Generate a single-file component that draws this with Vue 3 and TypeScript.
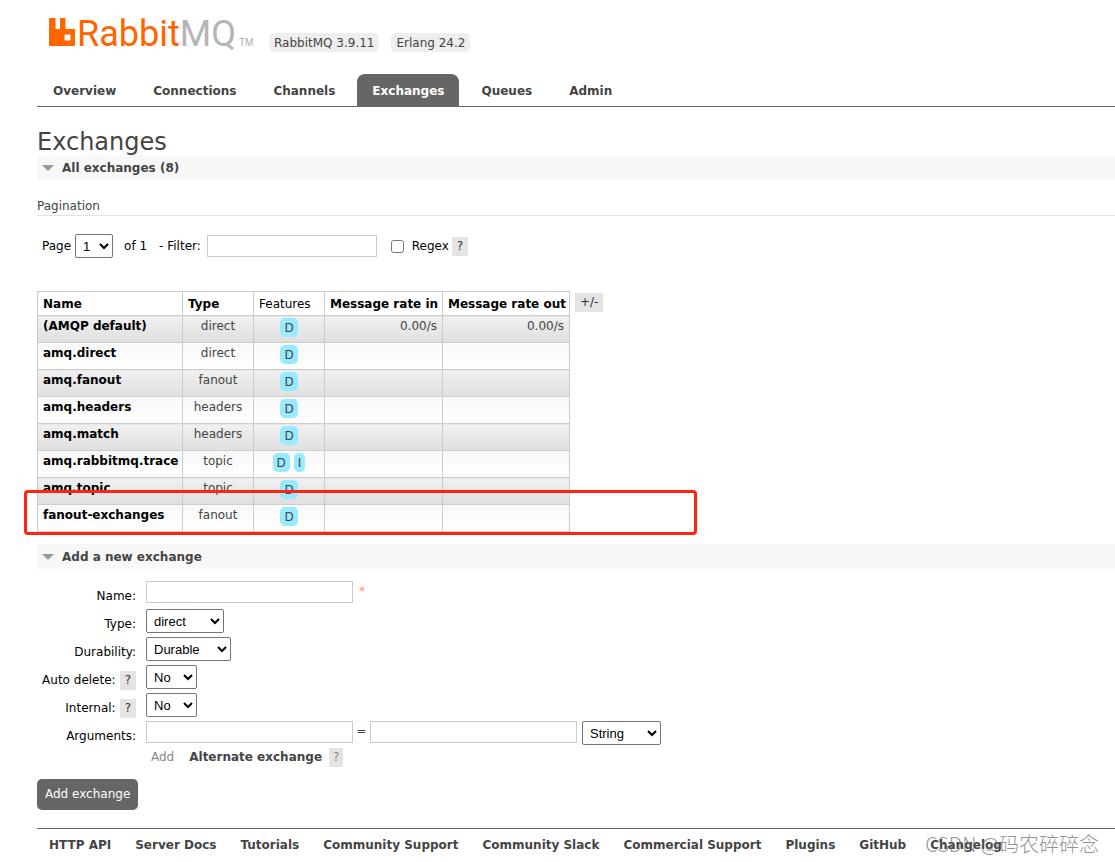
<script setup lang="ts">
import { ref } from 'vue'

interface Exchange {
  name: string
  type: string
  features: string[]
  rateIn?: string
  rateOut?: string
}

interface SelectField {
  id: string
  label: string
  options: string[]
  size: string
  help: boolean
}

const tabs: string[] = ['Overview', 'Connections', 'Channels', 'Exchanges', 'Queues', 'Admin']
const activeTab = ref('Exchanges')

const exchanges: Exchange[] = [
  { name: '(AMQP default)', type: 'direct', features: ['D'], rateIn: '0.00/s', rateOut: '0.00/s' },
  { name: 'amq.direct', type: 'direct', features: ['D'] },
  { name: 'amq.fanout', type: 'fanout', features: ['D'] },
  { name: 'amq.headers', type: 'headers', features: ['D'] },
  { name: 'amq.match', type: 'headers', features: ['D'] },
  { name: 'amq.rabbitmq.trace', type: 'topic', features: ['D', 'I'] },
  { name: 'amq.topic', type: 'topic', features: ['D'] },
  { name: 'fanout-exchanges', type: 'fanout', features: ['D'] },
]

const selectFields: SelectField[] = [
  { id: 'type', label: 'Type:', options: ['direct', 'fanout', 'headers', 'topic'], size: 'w-type', help: false },
  { id: 'durability', label: 'Durability:', options: ['Durable', 'Transient'], size: 'w-durability', help: false },
  { id: 'auto-delete', label: 'Auto delete:', options: ['No', 'Yes'], size: 'w-bool', help: true },
  { id: 'internal', label: 'Internal:', options: ['No', 'Yes'], size: 'w-bool', help: true },
]

const footerLinks: string[] = [
  'HTTP API', 'Server Docs', 'Tutorials', 'Community Support', 'Community Slack',
  'Commercial Support', 'Plugins', 'GitHub', 'Changelog',
]
</script>

<template>
  <div class="page">
    <header>
      <div class="brand">
        <a class="logo" href="#" aria-label="RabbitMQ">
          <svg class="mark" viewBox="0 0 26 28" aria-hidden="true">
            <path fill="#f60" fill-rule="evenodd" d="M1 0h4.500q1 0 1 1v9q0 1 1 1h2.500q1 0 1-1V1q0-1 1-1h3.500q1 0 1 1v9q0 1 1 1H25q1 0 1 1v15q0 1-1 1H1q-1 0-1-1V1q0-1 1-1ZM16.500 16.500q-1 0-1 1v4q0 1 1 1h4q1 0 1-1v-4q0-1-1-1Z" />
          </svg>
          <span class="word">Rabbit</span><span class="word grey">MQ</span><span class="tm">TM</span>
        </a>
        <span class="version">RabbitMQ 3.9.11</span>
        <span class="version">Erlang 24.2</span>
      </div>
      <nav class="tabs">
        <a
          v-for="tab in tabs" :key="tab" href="#"
          :class="{ active: tab === activeTab }" @click.prevent="activeTab = tab"
        >{{ tab }}</a>
      </nav>
    </header>

    <main>
      <h1>Exchanges</h1>
      <h2><svg class="arrow" viewBox="0 0 12 6" aria-hidden="true"><path d="M0 0h12L6 6z" fill="#999" /></svg>All exchanges (8)</h2>

      <h3>Pagination</h3>
      <div class="filter">
        <label for="page">Page</label>
        <select id="page" class="w-page"><option>1</option></select>
        <span class="of">of 1</span>
        <label for="filter">- Filter:</label>
        <input id="filter" class="filter-box" type="text">
        <input id="regex" type="checkbox">
        <label for="regex" class="regex">Regex</label>
        <button type="button" class="help">?</button>
      </div>

      <div class="listing">
        <table>
          <colgroup>
            <col class="c-name"><col class="c-type"><col class="c-features"><col class="c-in"><col class="c-out">
          </colgroup>
          <thead>
            <tr>
              <th>Name</th>
              <th>Type</th>
              <th class="plain">Features</th>
              <th>Message rate in</th>
              <th>Message rate out</th>
            </tr>
          </thead>
          <tbody>
            <tr v-for="x in exchanges" :key="x.name">
              <td><a href="#">{{ x.name }}</a></td>
              <td class="center">{{ x.type }}</td>
              <td class="center features"><abbr v-for="f in x.features" :key="f">{{ f }}</abbr></td>
              <td class="rate">{{ x.rateIn }}</td>
              <td class="rate">{{ x.rateOut }}</td>
            </tr>
          </tbody>
        </table>
        <button type="button" class="help columns">+/-</button>
        <div class="highlight"></div>
      </div>

      <h2><svg class="arrow" viewBox="0 0 12 6" aria-hidden="true"><path d="M0 0h12L6 6z" fill="#999" /></svg>Add a new exchange</h2>
      <form @submit.prevent>
        <div class="row">
          <div class="caption"><label for="name">Name:</label></div>
          <input id="name" class="field" type="text">
          <span class="required">*</span>
        </div>
        <div v-for="f in selectFields" :key="f.id" class="row">
          <div class="caption">
            <label :for="f.id">{{ f.label }}</label>
            <button v-if="f.help" type="button" class="help">?</button>
          </div>
          <select :id="f.id" :class="f.size"><option v-for="o in f.options" :key="o">{{ o }}</option></select>
        </div>
        <div class="row">
          <div class="caption"><label for="arg-key">Arguments:</label></div>
          <input id="arg-key" class="field" type="text">
          <span class="equals">=</span>
          <input class="field" type="text" aria-label="Argument value">
          <select class="w-kind" aria-label="Argument type"><option>String</option><option>Number</option><option>Boolean</option><option>List</option></select>
        </div>
        <div class="shortcuts">
          <span>Add</span>
          <a href="#">Alternate exchange</a>
          <button type="button" class="help">?</button>
        </div>
        <button type="submit" class="submit">Add exchange</button>
      </form>
    </main>

    <footer>
      <a v-for="link in footerLinks" :key="link" href="#">{{ link }}</a>
    </footer>
    <div class="watermark">CSDN @码农碎碎念</div>
  </div>
</template>

<style>
body { margin: 0; background: #fff; }
</style>

<style scoped>
.page {
  position: relative;
  box-sizing: border-box;
  min-height: 100vh;
  padding: 16px 0 0 37px;
  overflow: hidden;
  color: #444;
  font: 12px/18px Verdana, "DejaVu Sans", sans-serif;
}
a { color: #444; font-weight: bold; text-decoration: none; }
.brand { display: flex; align-items: flex-start; height: 58px; padding-left: 12px; }
.logo { display: flex; align-items: flex-start; width: 220px; font-weight: 400; }
.mark { flex: none; width: 26px; height: 28px; margin: 2px 2px 0 0; }
.word { color: #f60; font: 400 36px/36px Roboto, sans-serif; }
.grey { color: #b5b5b5; }
.tm { margin: 21px 0 0 3px; color: #aaa; font: 10px/12px "Liberation Sans", sans-serif; }
.version { margin: 17px 12px 0 0; padding: 1px 5px 0; border-radius: 5px; background: #eee; line-height: 18px; }
.tabs { display: flex; gap: 7px; padding-left: 1px; border-bottom: 1px solid #666; }
.tabs a { padding: 8px 15px 6px; border-radius: 8px 8px 0 0; }
.tabs a.active { background: #666; color: #fff; }
h1 { margin: 20px 0 0; padding-top: 2px; font-size: 24px; font-weight: 400; line-height: 26px; }
h2 { display: flex; align-items: center; gap: 8px; margin: 0; padding: 1px 5px 0; background: #f8f8f8; font-size: 12px; line-height: 24px; }
.arrow { width: 12px; height: 6px; }
h3 { margin: 17px 0 18px; border-bottom: 1px solid #e4e4e4; font-size: 12px; font-weight: 400; line-height: 18px; }
label { color: #000; }
input, select { box-sizing: border-box; margin: 0; }
input[type="text"] { height: 22px; border: 1px solid #ccc; }
select { height: 24px; padding: 0 3px; border: 1px solid #767676; border-radius: 2px; background: #fff; color: #000; font: 13px "Liberation Sans", Arial, sans-serif; }
.help { padding: 0 5px; border: 0; background: #e4e4e4; color: #333; font: inherit; line-height: 19px; }
.filter { display: flex; align-items: center; height: 24px; padding-left: 5px; }
.w-page { width: 38px; margin: 0 11px 0 4px; }
.of { margin-right: 12px; color: #000; }
.filter-box { width: 170px; margin: 0 14px 0 6px; }
.regex { margin: 0 3px 0 8px; }
.listing { position: relative; display: flex; align-items: flex-start; margin: 33px 0 12px; }
table { width: 533px; table-layout: fixed; border-collapse: collapse; }
.c-name { width: 145px; }
.c-type, .c-features { width: 71px; }
.c-in { width: 118px; }
.c-out { width: 127px; }
th, td { box-sizing: border-box; padding: 0 5px; border: 1px solid #ccc; text-align: left; white-space: nowrap; }
th { height: 24px; color: #000; }
.plain { font-weight: 400; }
td { height: 27px; padding-top: 1px; vertical-align: top; }
td a { color: #000; }
tbody tr:nth-child(odd) td { background: linear-gradient(#f0f0f0, #dfdfdf); }
tbody tr:nth-child(even) td { background: linear-gradient(#f8f8f8, #fff); }
.center { text-align: center; }
.rate { text-align: right; }
td.features { padding-top: 2px; }
abbr { display: inline-block; margin: 0 2px; padding: 1px 4px 0; border-radius: 5px; background: #98ebff; line-height: 18px; }
.columns { margin: 2px 0 0 5px; }
.highlight { position: absolute; top: 199px; left: -13px; box-sizing: border-box; width: 673px; height: 45px; border: 3px solid #ff2314; border-radius: 4px; pointer-events: none; }
form { padding-top: 12px; }
.row { display: flex; align-items: flex-start; height: 28px; }
.caption { display: flex; align-items: center; justify-content: flex-end; gap: 4px; width: 99px; height: 30px; margin-right: 10px; }
.field { width: 207px; }
.required { margin-left: 6px; color: #f88; line-height: 20px; }
.equals { width: 17px; line-height: 20px; text-align: center; }
.w-type { width: 78px; }
.w-durability { width: 85px; }
.w-bool { width: 51px; }
.w-kind { width: 79px; margin-left: 5px; }
.shortcuts { display: flex; align-items: center; height: 16px; padding-left: 114px; color: #888; }
.shortcuts a { margin: 0 7px 0 15px; }
.shortcuts .help { padding: 0 4px; color: #888; }
.submit { display: block; margin: 14px 0 18px; padding: 0 8px; border: 0; border-radius: 5px; background: #666; color: #fff; font: inherit; line-height: 31px; }
footer { display: flex; gap: 24px; padding: 7px 12px; border-top: 1px solid #666; white-space: nowrap; }
.watermark { position: absolute; right: 16px; bottom: 4px; color: rgba(110, 110, 110, 0.75); font: 300 20px/28px "Noto Sans CJK SC", sans-serif; }
</style>
